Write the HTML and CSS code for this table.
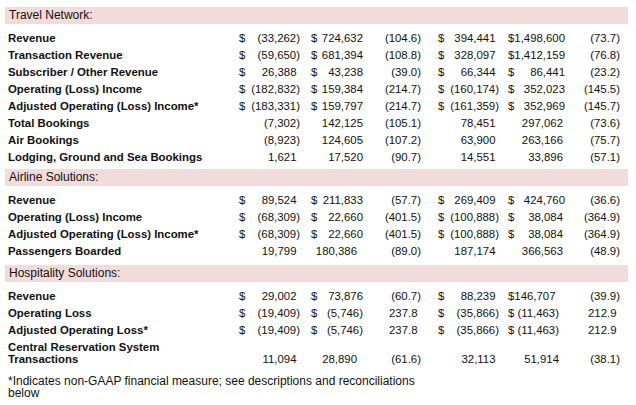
FILE: index.html
```html
<!DOCTYPE html>
<html>
<head>
<meta charset="utf-8">
<link rel="stylesheet" href="styles.css">
</head>
<body>
<div class="sheet">
  <div class="band">Travel Network:</div>
  <div class="rows">
    <div class="row"><div class="lbl">Revenue</div><div class="c c1"><span>$</span><span>(33,262)</span></div><div class="c c2"><span>$</span><span>724,632</span></div><div class="c c3">(104.6)</div><div class="c c4"><span>$</span><span class="p">394,441</span></div><div class="c c5"><span>$1,498,600</span></div><div class="c c6">(73.7)</div></div>
    <div class="row"><div class="lbl">Transaction Revenue</div><div class="c c1"><span>$</span><span>(59,650)</span></div><div class="c c2"><span>$</span><span>681,394</span></div><div class="c c3">(108.8)</div><div class="c c4"><span>$</span><span class="p">328,097</span></div><div class="c c5"><span>$1,412,159</span></div><div class="c c6">(76.8)</div></div>
    <div class="row"><div class="lbl">Subscriber / Other Revenue</div><div class="c c1"><span>$</span><span class="p">26,388</span></div><div class="c c2"><span>$</span><span>43,238</span></div><div class="c c3">(39.0)</div><div class="c c4"><span>$</span><span class="p">66,344</span></div><div class="c c5"><span>$</span><span>86,441</span></div><div class="c c6">(23.2)</div></div>
    <div class="row"><div class="lbl">Operating (Loss) Income</div><div class="c c1"><span>$</span><span>(182,832)</span></div><div class="c c2"><span>$</span><span>159,384</span></div><div class="c c3">(214.7)</div><div class="c c4"><span>$</span><span>(160,174)</span></div><div class="c c5"><span>$</span><span>352,023</span></div><div class="c c6">(145.5)</div></div>
    <div class="row"><div class="lbl">Adjusted Operating (Loss) Income*</div><div class="c c1"><span>$</span><span>(183,331)</span></div><div class="c c2"><span>$</span><span>159,797</span></div><div class="c c3">(214.7)</div><div class="c c4"><span>$</span><span>(161,359)</span></div><div class="c c5"><span>$</span><span>352,969</span></div><div class="c c6">(145.7)</div></div>
    <div class="row"><div class="lbl">Total Bookings</div><div class="c c1"><span></span><span>(7,302)</span></div><div class="c c2"><span></span><span>142,125</span></div><div class="c c3">(105.1)</div><div class="c c4"><span></span><span class="p">78,451</span></div><div class="c c5"><span></span><span class="q">297,062</span></div><div class="c c6">(73.6)</div></div>
    <div class="row"><div class="lbl">Air Bookings</div><div class="c c1"><span></span><span>(8,923)</span></div><div class="c c2"><span></span><span>124,605</span></div><div class="c c3">(107.2)</div><div class="c c4"><span></span><span class="p">63,900</span></div><div class="c c5"><span></span><span class="q">263,166</span></div><div class="c c6">(75.7)</div></div>
    <div class="row"><div class="lbl">Lodging, Ground and Sea Bookings</div><div class="c c1"><span></span><span class="p">1,621</span></div><div class="c c2"><span></span><span>17,520</span></div><div class="c c3">(90.7)</div><div class="c c4"><span></span><span class="p">14,551</span></div><div class="c c5"><span></span><span class="q">33,896</span></div><div class="c c6">(57.1)</div></div>
  </div>

  <div class="band">Airline Solutions:</div>
  <div class="rows airline">
    <div class="row"><div class="lbl">Revenue</div><div class="c c1"><span>$</span><span class="p">89,524</span></div><div class="c c2"><span>$</span><span>211,833</span></div><div class="c c3">(57.7)</div><div class="c c4"><span>$</span><span class="p">269,409</span></div><div class="c c5"><span>$</span><span>424,760</span></div><div class="c c6">(36.6)</div></div>
    <div class="row"><div class="lbl">Operating (Loss) Income</div><div class="c c1"><span>$</span><span>(68,309)</span></div><div class="c c2"><span>$</span><span>22,660</span></div><div class="c c3">(401.5)</div><div class="c c4"><span>$</span><span>(100,888)</span></div><div class="c c5"><span>$</span><span class="q">38,084</span></div><div class="c c6">(364.9)</div></div>
    <div class="row"><div class="lbl">Adjusted Operating (Loss) Income*</div><div class="c c1"><span>$</span><span>(68,309)</span></div><div class="c c2"><span>$</span><span>22,660</span></div><div class="c c3">(401.5)</div><div class="c c4"><span>$</span><span>(100,888)</span></div><div class="c c5"><span>$</span><span class="q">38,084</span></div><div class="c c6">(364.9)</div></div>
    <div class="row"><div class="lbl">Passengers Boarded</div><div class="c c1"><span></span><span class="p">19,799</span></div><div class="c c2"><span></span><span class="w">180,386</span></div><div class="c c3">(89.0)</div><div class="c c4"><span></span><span class="p">187,174</span></div><div class="c c5"><span></span><span class="q">366,563</span></div><div class="c c6">(48.9)</div></div>
  </div>

  <div class="band">Hospitality Solutions:</div>
  <div class="rows">
    <div class="row"><div class="lbl">Revenue</div><div class="c c1"><span>$</span><span class="p">29,002</span></div><div class="c c2"><span>$</span><span>73,876</span></div><div class="c c3">(60.7)</div><div class="c c4"><span>$</span><span class="p">88,239</span></div><div class="c c5 tight"><span>$146,707</span></div><div class="c c6">(39.9)</div></div>
    <div class="row"><div class="lbl">Operating Loss</div><div class="c c1"><span>$</span><span>(19,409)</span></div><div class="c c2"><span>$</span><span>(5,746)</span></div><div class="c c3 p">237.8</div><div class="c c4"><span>$</span><span>(35,866)</span></div><div class="c c5"><span>$</span><span class="w">(11,463)</span></div><div class="c c6 p">212.9</div></div>
    <div class="row"><div class="lbl">Adjusted Operating Loss*</div><div class="c c1"><span>$</span><span>(19,409)</span></div><div class="c c2"><span>$</span><span>(5,746)</span></div><div class="c c3 p">237.8</div><div class="c c4"><span>$</span><span>(35,866)</span></div><div class="c c5"><span>$</span><span class="w">(11,463)</span></div><div class="c c6 p">212.9</div></div>
    <div class="row tall"><div class="lbl">Central Reservation System<br>Transactions</div><div class="c c1"><span></span><span class="p">11,094</span></div><div class="c c2"><span></span><span class="w">28,890</span></div><div class="c c3">(61.6)</div><div class="c c4"><span></span><span class="p">32,113</span></div><div class="c c5"><span></span><span class="w">51,914</span></div><div class="c c6">(38.1)</div></div>
  </div>

  <p class="note">*Indicates non-GAAP financial measure; see descriptions and reconciliations below</p>
</div>
</body>
</html>
```

FILE: styles.css
```css
html, body {
  margin: 0;
  padding: 0;
  background: #ffffff;
}

body {
  font-family: "Liberation Sans", Arial, sans-serif;
  color: #111111;
  font-size: 11.4px;
}

.sheet {
  padding: 7px 8px 0 5px;
}

.band {
  background: #f2dcdb;
  height: 17px;
  line-height: 17px;
  font-size: 12px;
  padding-left: 4px;
  width: 619px;
}

.rows {
  padding: 6px 0 3px 3px;
}

.rows.airline {
  padding-bottom: 5px;
}

.row {
  display: grid;
  grid-template-columns: 231px 61px 11px 52px 58px 17px 61px 9px 57px 55px;
  height: 17px;
  line-height: 17px;
  align-items: end;
}

.row.tall {
  height: 25px;
  line-height: 11.5px;
  padding-top: 1px;
}

.lbl {
  font-weight: bold;
  grid-column: 1;
  white-space: nowrap;
}

.c {
  display: flex;
  justify-content: space-between;
  white-space: nowrap;
}

.c1 { grid-column: 2; }
.c2 { grid-column: 4; }
.c3 { grid-column: 5; justify-content: flex-end; }
.c4 { grid-column: 7; }
.c5 { grid-column: 9; }
.c6 { grid-column: 10; justify-content: flex-end; }

.p { padding-right: 3.5px; }
.q { padding-right: 2px; }
.w { padding-right: 6px; }

.tight { padding-right: 3px; }

.note {
  margin: 7px 0 0 3px;
  width: 420px;
  font-size: 12px;
  line-height: 12px;
}
```
